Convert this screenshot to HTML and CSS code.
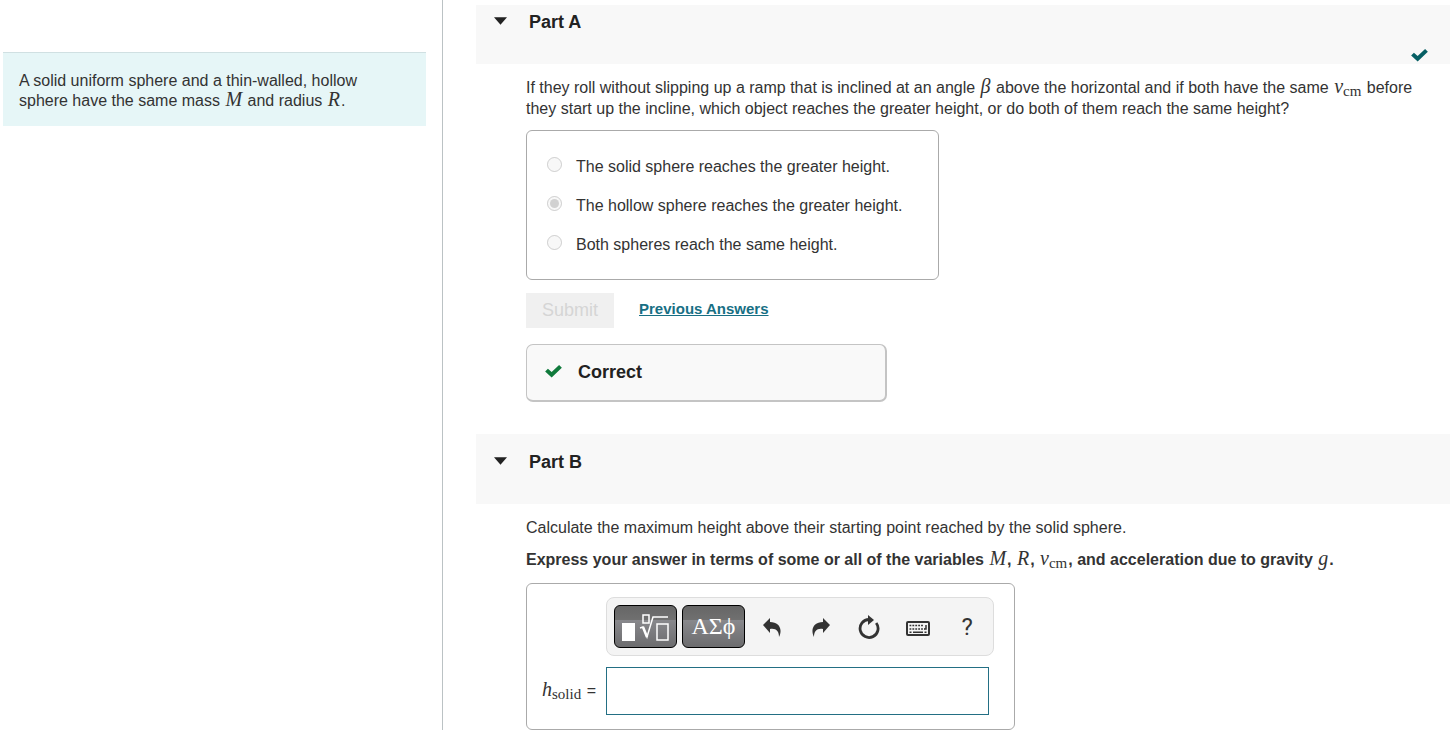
FILE: index.html
```
<!DOCTYPE html>
<html lang="en">
<head>
    <meta charset="UTF-8">
    <meta name="viewport" content="width=device-width, initial-scale=1.0">
    <title>Rolling Spheres</title>
    <link rel="stylesheet" href="styles.css">
</head>
<body>
    <div class="page">
        <aside class="sidebar">
            <p class="intro">A solid uniform sphere and a thin-walled, hollow sphere have the same mass <var>M</var> and radius <var>R</var>.</p>
        </aside>

        <main class="content">
            <section>
                <header class="part-header part-header-first">
                    <svg class="caret" viewBox="0 0 14 8"><path d="M0 0h14L7 8z"/></svg>
                    <h2>Part A</h2>
                    <svg class="check check-done" viewBox="0 0 18 14"><path d="M0 7 3 4l4 3.500L15 0l3 3L7 13.500z"/></svg>
                </header>
                <div class="part-body">
                    <p class="question">If they roll without slipping up a ramp that is inclined at an angle <var>β</var> above the horizontal and if both have the same <var>v<sub>cm</sub></var> before they start up the incline, which object reaches the greater height, or do both of them reach the same height?</p>

                    <div class="choices">
                        <label class="choice"><input type="radio" name="height" disabled><span>The solid sphere reaches the greater height.</span></label>
                        <label class="choice"><input type="radio" name="height" checked disabled><span>The hollow sphere reaches the greater height.</span></label>
                        <label class="choice"><input type="radio" name="height" disabled><span>Both spheres reach the same height.</span></label>
                    </div>

                    <div class="actions">
                        <button type="button" class="submit" disabled>Submit</button>
                        <a href="#" class="previous">Previous Answers</a>
                    </div>

                    <div class="feedback">
                        <svg class="check" viewBox="0 0 18 14"><path d="M0 7 3 4l4 3.500L15 0l3 3L7 13.500z"/></svg>
                        <h3>Correct</h3>
                    </div>
                </div>
            </section>

            <section>
                <header class="part-header">
                    <svg class="caret" viewBox="0 0 14 8"><path d="M0 0h14L7 8z"/></svg>
                    <h2>Part B</h2>
                </header>
                <div class="part-body">
                    <p class="question">Calculate the maximum height above their starting point reached by the solid sphere.</p>
                    <p class="instructions">Express your answer in terms of some or all of the variables <var>M</var>, <var>R</var>, <var>v<sub>cm</sub></var>, and acceleration due to gravity <var>g</var>.</p>

                    <div class="answer">
                        <div class="toolbar">
                            <button type="button" class="template" aria-label="Templates">
                                <svg width="50" height="30" viewBox="0 0 50 30">
                                    <path fill="#fff" d="M2 11h13v18H2z"/>
                                    <path fill="none" stroke="#fff" stroke-width="1.500" d="M23 3h6v8h-6zM37 12h11v16H37z"/>
                                    <path fill="none" stroke="#fff" stroke-width="1.500" d="M20 16l3-1 4 10 6-20h15"/>
                                    <path fill="none" stroke="#fff" stroke-width="2.500" d="M23 15l4 10"/>
                                </svg>
                            </button>
                            <button type="button" class="template">ΑΣϕ</button>
                            <button type="button" class="tool" aria-label="Undo">
                                <svg width="20" height="20" viewBox="0 0 20 20"><path d="M1 8 8 1v4c9 0 13 7 9 15 0-6-3-9-9-8v4z"/></svg>
                            </button>
                            <button type="button" class="tool" aria-label="Redo">
                                <svg width="20" height="20" viewBox="0 0 20 20"><path d="M19 8 12 1v4c-9 0-13 7-9 15 0-6 3-9 9-8v4z"/></svg>
                            </button>
                            <button type="button" class="tool" aria-label="Reset">
                                <svg width="24" height="26" viewBox="0 0 24 26"><path fill="none" stroke="#333" stroke-width="2.800" d="M19.200 9A9 9 0 1 1 12 5.500"/><path d="M11 1l6 5-6 5z"/></svg>
                            </button>
                            <button type="button" class="tool" aria-label="Keyboard">
                                <svg class="keyboard" width="24" height="16" viewBox="0 0 24 16">
                                    <rect x="1" y="1" width="22" height="13" rx="1" fill="none" stroke="#333" stroke-width="2"/>
                                    <path fill="none" stroke="#333" stroke-width="1.500" d="M3.500 4.500h14" stroke-dasharray="1.800 1.100"/>
                                    <path fill="none" stroke="#333" stroke-width="1.500" d="M3.500 8h15" stroke-dasharray="1.800 1.100"/>
                                    <path fill="none" stroke="#333" stroke-width="1.500" d="M3.500 11.200h2M7 11.200h10M18.500 11.200h2M20 4v4h-2"/>
                                </svg>
                            </button>
                            <button type="button" class="tool help" aria-label="Help">?</button>
                        </div>
                        <label class="symbol" for="hsolid"><var>h<sub>solid</sub></var> =</label>
                        <input type="text" id="hsolid" class="expression">
                    </div>
                </div>
            </section>
        </main>
    </div>
</body>
</html>
```
FILE: styles.css
```
* {
    box-sizing: border-box;
}
body {
    margin: 0;
    font-family: Arial, "Liberation Sans", sans-serif;
    font-size: 16px;
    line-height: 20px;
    color: #333;
    background-color: #fff;
}
h2, h3, p {
    margin: 0;
}
h2, h3 {
    font-size: 18px;
    line-height: 20px;
    color: #222;
}
var {
    margin: 0 1px;
    font-family: "Liberation Serif", serif;
    font-size: 20px;
    font-weight: normal;
    line-height: 16px;
}
sub {
    font-size: 15px;
    font-style: normal;
    line-height: 12px;
    vertical-align: -3px;
}
.page {
    display: grid;
    grid-template-columns: 443px 1fr;
    min-height: 100vh;
}
.sidebar {
    padding: 52px 16px 0 3px;
    border-right: 1px solid #bbc2c4;
}
.intro {
    padding: 18px 48px 15px 16px;
    border-top: 1px solid #d0e0e2;
    background-color: #e6f6f7;
}
.content {
    padding: 5px 0 0 33px;
}
.part-header {
    display: flex;
    align-items: flex-start;
    height: 70px;
    padding: 18px 22px 0 18px;
    background-color: #f8f8f8;
}
.part-header-first {
    height: 59px;
    padding: 7px 22px 2px 18px;
}
.caret {
    width: 13px;
    height: 8px;
    margin: 5px 22px 0 0;
    fill: #222;
}
.check {
    width: 17px;
    height: 13px;
    fill: #107a3c;
}
.check-done {
    align-self: flex-end;
    margin-left: auto;
    fill: #075f64;
}
.part-body {
    padding: 13px 24px 0 50px;
}
.question {
    line-height: 21px;
}
.choices {
    display: flex;
    flex-direction: column;
    gap: 19px;
    width: fit-content;
    margin-top: 11px;
    padding: 26px 36px 24px 20px;
    border: 1px solid #aaa;
    border-radius: 6px;
}
.choice {
    display: flex;
    gap: 14px;
}
.choice input {
    width: 15px;
    height: 15px;
    margin: 0;
}
.actions {
    display: flex;
    gap: 25px;
    margin-top: 13px;
}
.submit {
    height: 35px;
    padding: 0 16px;
    border: 0;
    font: 18px Arial, "Liberation Sans", sans-serif;
    color: #d5d5d5;
    background-color: #f0f0f0;
}
.previous {
    padding-top: 6px;
    font-size: 15px;
    font-weight: bold;
    color: #176f84;
}
.feedback {
    display: flex;
    align-items: center;
    gap: 16px;
    width: 361px;
    height: 58px;
    margin: 16px 0 32px;
    padding: 0 18px 2px;
    border: 1px solid #c4c4c4;
    border-width: 1px 2px 2px 1px;
    border-radius: 7px;
    background-color: #f9f9f9;
}
.instructions {
    margin-top: 12px;
    font-weight: bold;
}
.answer {
    display: grid;
    grid-template-columns: auto 388px;
    column-gap: 10px;
    row-gap: 11px;
    align-items: center;
    width: fit-content;
    margin-top: 13px;
    padding: 13px 20px 14px 14px;
    border: 1px solid #aaa;
    border-radius: 6px;
}
.toolbar {
    display: flex;
    grid-column: 2;
    align-items: center;
    gap: 5px;
    height: 59px;
    padding: 0 4px 0 7px;
    border: 1px solid #ddd;
    border-radius: 8px;
    background-color: #f4f4f4;
}
.template {
    display: flex;
    align-items: center;
    justify-content: center;
    width: 63px;
    height: 43px;
    padding: 0;
    border: 1px solid #000;
    border-radius: 6px;
    font: 24px "Liberation Serif", serif;
    color: #fff;
    background: linear-gradient(#666 0, #707070 34%, #88888c 35%, #6c6c6e 100%);
}
.tool {
    display: flex;
    flex: 1;
    align-items: center;
    justify-content: center;
    padding: 0;
    border: 0;
    color: #333;
    background: none;
}
.tool svg {
    fill: #333;
}
.keyboard {
    margin-top: 5px;
}
.help {
    font: 24px Roboto, sans-serif;
}
.symbol {
    white-space: nowrap;
}
.expression {
    width: 383px;
    height: 48px;
    padding: 0 8px;
    border: 1px solid #236f84;
    font-size: 18px;
    background-color: #fff;
}
```
